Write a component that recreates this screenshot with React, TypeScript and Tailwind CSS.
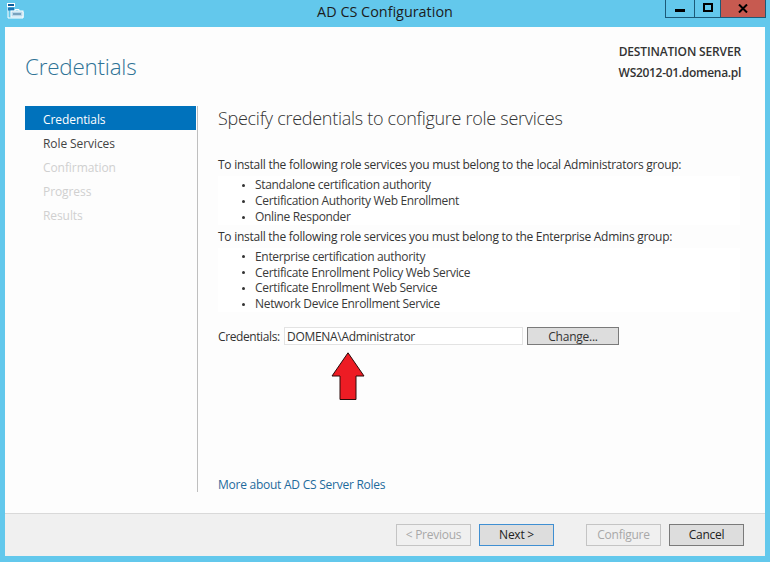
import React from "react";

const sidebarItems = [
    { label: "Credentials", className: "bg-[#0072bc] text-white" },
    { label: "Role Services", className: "text-[#444444]" },
    { label: "Confirmation", className: "text-[#d0d0d0]" },
    { label: "Progress", className: "text-[#d0d0d0]" },
    { label: "Results", className: "text-[#d0d0d0]" },
];

const localServices = [
    "Standalone certification authority",
    "Certification Authority Web Enrollment",
    "Online Responder",
];

const enterpriseServices = [
    "Enterprise certification authority",
    "Certificate Enrollment Policy Web Service",
    "Certificate Enrollment Web Service",
    "Network Device Enrollment Service",
];

const ServiceList: React.FC<{ items: string[]; rowClass: string }> = ({ items, rowClass }) => (
    <ul className="w-[522px] bg-white pt-[1px] tracking-[-0.32px] text-[#3a3a3a]">
        {items.map((item) => (
            <li key={item} className={`flex items-center leading-none ${rowClass}`}>
                <span className="ml-[24px] mr-[10px] h-[3px] w-[3px] rounded-full bg-[#333333]"></span>
                {item}
            </li>
        ))}
    </ul>
);

const FooterButton: React.FC<{ label: string; className: string }> = ({ label, className }) => (
    <button className={`h-[22px] w-[75px] border text-[12px] ${className}`}>{label}</button>
);

export default function App() {
    return (
        <div className="flex h-[562px] w-[770px] flex-col overflow-hidden bg-[#63c8ec] font-['Open_Sans',sans-serif] text-[12px] tracking-[-0.25px] text-[#333333]">
            {/* title bar */}
            <div className="grid h-[27px] shrink-0 grid-cols-[1fr_auto_1fr]">
                <div className="pl-[7px] pt-[3px]">
                    <svg width="17" height="16" viewBox="0 0 17 16" fill="none">
                        <rect x="0.5" y="0.5" width="7" height="3" fill="#0b5e9e" stroke="#ffffff" strokeWidth="1" />
                        <path d="M1 4v11h15V9H7" stroke="#ffffff" strokeWidth="1" />
                        <rect x="1" y="4.5" width="6" height="3" fill="#1b75b5" />
                        <rect x="4" y="8" width="12" height="6" fill="#b8d8ea" stroke="#ffffff" strokeWidth="1" />
                        <path d="M8 8V6.5h4V8" stroke="#ffffff" strokeWidth="1" />
                        <path d="M6 11h8" stroke="#3a6d90" strokeWidth="1" />
                    </svg>
                </div>
                <div className="pt-[3px] text-[14.4px] leading-[18px] tracking-normal text-[#1c1c1c]">AD CS Configuration</div>
                <div className="flex justify-end pr-[4px]">
                    <div className="flex h-[18px]">
                        <div className="flex w-[29px] items-end justify-center border-b border-l border-[#1c5a78] pb-[5px]">
                            <span className="h-[3px] w-[10px] bg-black"></span>
                        </div>
                        <div className="flex w-[26px] items-start justify-center border-l border-b border-[#1c5a78] pt-[3px]">
                            <span className="h-[9px] w-[10px] border-2 border-black"></span>
                        </div>
                        <div className="flex w-[46px] items-center justify-center border-x border-b border-[#1c5a78] bg-[#c75a50] pb-[1px]">
                            <svg width="10" height="9" viewBox="0 0 10 9">
                                <path d="M1 0.5L9 8.5M9 0.5L1 8.5" stroke="#000000" strokeWidth="2" />
                            </svg>
                        </div>
                    </div>
                </div>
            </div>

            {/* window body */}
            <div className="mx-[5px] mb-[6px] flex flex-1 flex-col bg-[#fdfdfd]">
                <div className="flex h-[79px] shrink-0 justify-between pl-[20px] pr-[24px]">
                    <div className="pt-[23px] text-[22.4px] font-light leading-[34px] tracking-[-0.2px] text-[#2f7396]">Credentials</div>
                    <div className="pt-[14px] text-right font-semibold leading-[21px] tracking-[-0.3px] text-[#333333]">
                        <div className="tracking-[-0.15px]">DESTINATION SERVER</div>
                        <div>WS2012-01.domena.pl</div>
                    </div>
                </div>

                <div className="flex flex-1">
                    <div className="ml-[20px] h-[386px] w-[173px] shrink-0 border-r border-[#bfbfbf]">
                        {sidebarItems.map((item) => (
                            <div key={item.label} className={`flex h-[24px] w-[171px] items-center pl-[18px] pt-[4px] tracking-[-0.08px] ${item.className}`}>
                                {item.label}
                            </div>
                        ))}
                    </div>

                    <div className="ml-[20px] flex h-[386px] flex-1 flex-col">
                        <div className="h-[24px] text-[18px] font-light leading-[24px] tracking-[-0.28px] text-[#333333]">Specify credentials to configure role services</div>
                        <div className="mt-[26px] h-[20px] leading-[18px]">To install the following role services you must belong to the local Administrators group:</div>
                        <ServiceList items={localServices} rowClass="h-[16px]" />
                        <div className="mt-[3px] h-[20px] leading-[18px] tracking-[-0.26px]">To install the following role services you must belong to the Enterprise Admins group:</div>
                        <ServiceList items={enterpriseServices} rowClass="h-[15.75px]" />

                        <div className="mt-[15px] flex h-[18px] items-center">
                            <span className="w-[66px] pt-[2px] tracking-[-0.4px]">Credentials:</span>
                            <div className="flex h-[18px] w-[239px] items-center border border-[#e3e3e3] bg-white pl-[2px] pt-[2px] tracking-[-0.3px]">DOMENA\Administrator</div>
                            <button className="ml-[4px] h-[18px] w-[92px] border border-[#7a7a7a] bg-[#dddddd] pt-[1px] text-[12px] leading-none">Change...</button>
                        </div>

                        <svg className="ml-[113px] mt-[7px]" width="34" height="48" viewBox="0 0 34 48">
                            <path d="M17 0.8L33 24H25V47.5H9V24H1Z" fill="#ed1c24" stroke="#2b0a0a" strokeWidth="1" />
                        </svg>

                        <a className="mt-auto leading-[14px] text-[#1e6a9c]" href="#">More about AD CS Server Roles</a>
                    </div>
                </div>

                <div className="flex h-[43px] shrink-0 items-center border-t border-[#d9d9d9] bg-[#f0f0f0] pl-[391px] pb-[1px]">
                    <FooterButton label="< Previous" className="border-[#c4c4c4] bg-[#f0f0f0] text-[#a8a8a8]" />
                    <FooterButton label="Next >" className="ml-[8px] border-[#3f8fd2] bg-[#dddddd] text-[#222222]" />
                    <FooterButton label="Configure" className="ml-[32px] border-[#c4c4c4] bg-[#f0f0f0] text-[#a8a8a8]" />
                    <FooterButton label="Cancel" className="ml-[8px] border-[#7a7a7a] bg-[#dddddd] text-[#222222]" />
                </div>
            </div>
        </div>
    );
}
